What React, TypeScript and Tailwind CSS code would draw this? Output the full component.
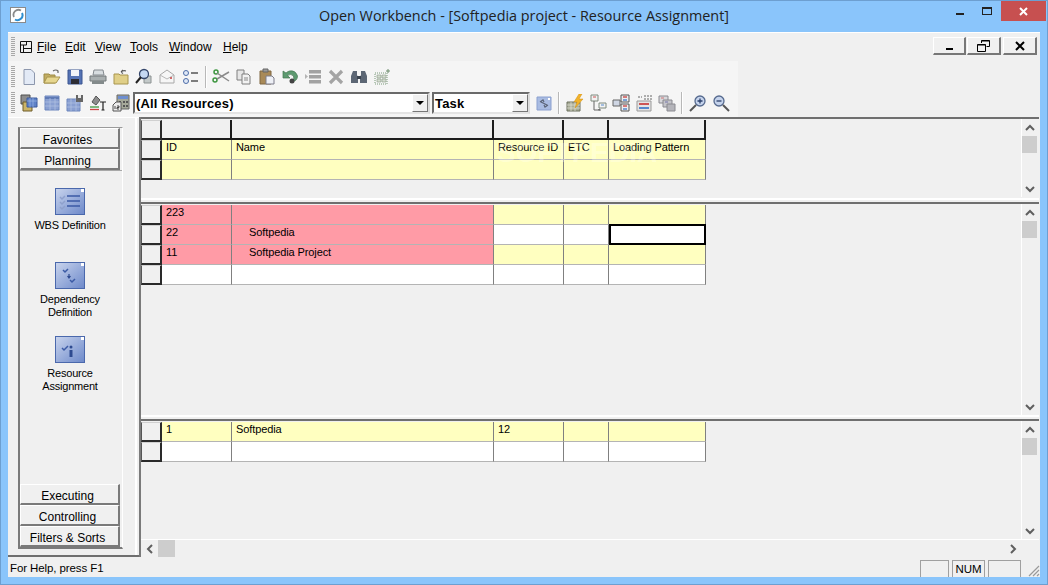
import type { ReactNode } from 'react';

const ui = { fontFamily: '"Liberation Sans", Arial, sans-serif' };

function Ico({ children }: { children: ReactNode }) {
  return (
    <svg width="18" height="18" viewBox="0 0 18 18" fill="none">
      {children}
    </svg>
  );
}

const icons: Record<string, ReactNode> = {
  new: <path d="M4 1.500h7l3.500 3.500v11.500H4z" fill="#e3eaf6" stroke="#8d97ad" />,
  open: (
    <>
      <path d="M1 6h5l1 1h5v8H1z" fill="#c2ad62" stroke="#9c8a45" />
      <path d="M1 15l3-6h13l-4 6z" fill="#e6d68f" stroke="#a8954e" />
      <path d="M10 3q3-2 5 0v2" stroke="#666" strokeWidth="1.200" />
    </>
  ),
  save: (
    <>
      <path d="M2 2h14v14H2z" fill="#5472b4" stroke="#3b5590" />
      <path d="M5 2h8v6H5z" fill="#f0f2f8" />
      <path d="M5 11h8v5H5z" fill="#2c2c34" />
    </>
  ),
  print: (
    <>
      <path d="M5 2h9l1 5H4z" fill="#d8dde0" stroke="#858b90" />
      <path d="M1 8h16v5H1z" fill="#a9afb0" stroke="#72787a" />
      <path d="M3 13h12v3H3z" fill="#838a8b" />
    </>
  ),
  folderUp: (
    <>
      <path d="M2 6h5l1 1h8v9H2z" fill="#e0cf88" stroke="#a8954e" />
      <path d="M9 4q2-2 5-1M9 4l2-2M9 4l2 1.500" stroke="#555" strokeWidth="1.100" />
    </>
  ),
  search: (
    <>
      <path d="M9 8h7v7H9z" fill="#c3c9c9" stroke="#8c9292" />
      <circle cx="9" cy="6" r="4.500" fill="#c5d8f2" stroke="#34466a" strokeWidth="1.300" />
      <path d="M6 9l-5 6" stroke="#222" strokeWidth="2" />
    </>
  ),
  mail: (
    <>
      <path d="M2 7l7-5 7 5v8H2z" fill="#f6f6f6" stroke="#a8a8a8" />
      <path d="M2 7l7 4 7-4" stroke="#b8b8b8" />
      <path d="M12 9h2v2h-2z" fill="#cf6a6a" />
    </>
  ),
  list: (
    <>
      <circle cx="5" cy="5" r="2.500" fill="#dfe8f6" stroke="#4d6da8" />
      <circle cx="5" cy="13" r="2.500" fill="#dfe8f6" stroke="#4d6da8" />
      <path d="M10 5h7M10 13h7" stroke="#555" strokeWidth="1.300" />
    </>
  ),
  cut: (
    <>
      <circle cx="4" cy="4" r="2" stroke="#3e9640" strokeWidth="1.500" />
      <circle cx="3" cy="12" r="2" stroke="#3e9640" strokeWidth="1.500" />
      <path d="M5 5l12 8M5 11l12-7" stroke="#8a8a8a" strokeWidth="1.500" />
    </>
  ),
  copy: (
    <>
      <path d="M2 2h7v10H2z" fill="#e6e6e6" stroke="#7f7f7f" />
      <path d="M7 6h6l2 2v8H7z" fill="#f2f2f2" stroke="#7f7f7f" />
      <path d="M9 10h4M9 12h4" stroke="#8a8a8a" />
    </>
  ),
  paste: (
    <>
      <path d="M2 3h11v13H2z" fill="#a98a58" stroke="#7f6741" />
      <path d="M5 1h5v3H5z" fill="#9a9a9a" stroke="#666" />
      <path d="M8 8h6l2 2v6H8z" fill="#eef0f6" stroke="#7d7d8a" />
    </>
  ),
  undo: (
    <>
      <path d="M2 3v7h7L6.500 7.500Q10 5 12.500 8q1.500 3-2 6 6-1 6-6-2-6-8-5-2 .5-3.500 2L2 3z" fill="#5d9a70" stroke="#44754f" strokeWidth=".7" />
      <circle cx="11" cy="13" r="2.500" fill="#444" />
    </>
  ),
  rows: (
    <>
      <path d="M5 2h12v3.500H5zM5 7h12v3.500H5zM5 12h12v3.500H5z" fill="#a2a2a2" />
      <path d="M1 6l3 2.500L1 11z" fill="#b4b4b4" />
    </>
  ),
  del: <path d="M3 3l12 12M15 3L3 15" stroke="#a4a4a4" strokeWidth="3.200" />,
  binoc: (
    <>
      <path d="M3 3h4v4l1 2v6H1V8zM11 3h4l2 5v7h-7V9l1-2z" fill="#5c6674" />
      <path d="M7 8h4v3H7z" fill="#3a424e" />
    </>
  ),
  grid: (
    <>
      <path d="M2 5h12v11H2z" stroke="#7b9a7b" strokeDasharray="1 1" />
      <path d="M4 7h4v3H4zM9 7h4v3H9zM4 11h4v3H4zM9 11h4v3H9z" fill="#d4dcd0" stroke="#8a9a86" strokeWidth=".6" />
      <path d="M15 1v4M13 3h4" stroke="#6d8c6d" />
    </>
  ),
  views: (
    <>
      <path d="M1 1h9v9H1z" fill="#8c8c8c" stroke="#4f4f4f" />
      <path d="M3 8h9v9H3z" fill="#cbb468" stroke="#6e5d28" />
      <path d="M7 4h10v9H7z" fill="#5f82c8" stroke="#3d5a9c" />
      <path d="M7 7h10M10 4v9M13 4v9" stroke="#a9c0ea" strokeWidth=".6" />
    </>
  ),
  table: (
    <>
      <path d="M2 2h14v14H2z" fill="#8aa0d2" stroke="#6c86bd" />
      <path d="M2 4h14" stroke="#5f7ab5" strokeWidth="2" />
      <path d="M2 8h14M2 12h14M7 4v12M12 4v12" stroke="#b3c3e4" strokeWidth=".7" />
    </>
  ),
  tableSave: (
    <>
      <path d="M1 5h13v12H1z" fill="#8aa0d2" stroke="#6c86bd" />
      <path d="M1 9h13M1 13h13M5 5v12M10 5v12" stroke="#b3c3e4" strokeWidth=".7" />
      <path d="M10 1h7v7h-7z" fill="#666" />
      <path d="M12 1h3v3h-3z" fill="#e8e8e8" />
    </>
  ),
  font: (
    <>
      <path d="M3 8l4-6 4 4-4 5z" fill="#8d8d8d" stroke="#555" />
      <path d="M1 13h9" stroke="#3e9640" strokeWidth="1.300" />
      <path d="M1 15.500h9" stroke="#c44" strokeWidth="1.300" />
      <path d="M11 8h6M14 8v8M12.500 16h3" stroke="#222" strokeWidth="1.200" />
    </>
  ),
  calc: (
    <>
      <path d="M5 1h12v14H5z" fill="#a6a99a" stroke="#666" />
      <path d="M6 2h10v3H6z" fill="#6f8fd0" />
      <path d="M7 7h2v2H7zM11 7h2v2h-2zM14 7h2v2h-2zM11 11h2v2h-2zM14 11h2v2h-2z" fill="#555" />
      <path d="M1 11l3-3h5v9H1z" fill="#ededed" stroke="#555" />
      <path d="M3 12v3M5 12h2v1.500H5V15h2" stroke="#222" strokeWidth=".8" />
    </>
  ),
  refresh: (
    <>
      <path d="M2 3h14v13H2z" fill="#a9bce2" stroke="#8ba0cf" />
      <path d="M5 8l3-2 1 2M13 11l-3 2-1-2M6 8l6 3" stroke="#5a6478" strokeWidth="1.200" />
      <path d="M13 4h2v2h-2z" fill="#fff" />
    </>
  ),
  flash: (
    <>
      <path d="M1 8h13v9H1z" fill="#a9ad98" stroke="#6c705e" />
      <path d="M1 11h13M1 14h13M5 8v9M9 8v9" stroke="#e2e4d8" strokeWidth=".7" />
      <path d="M13 0l-5 8h3l-2 6 8-9h-4l3-5z" fill="#f2b32a" stroke="#d08e12" strokeWidth=".5" />
    </>
  ),
  tree: (
    <>
      <path d="M2 1h7v6H2z" fill="#f2f2f2" stroke="#7f8a7f" />
      <path d="M10 9h7v5h-7z" fill="#f2f2f2" stroke="#7f8a7f" />
      <path d="M4 3h3" stroke="#c55" />
      <path d="M12 11h3" stroke="#58c" />
      <path d="M5 7v9h6M9 16l2-1v2" stroke="#666" />
    </>
  ),
  branch: (
    <>
      <path d="M1 6h7v6H1z" fill="#cfd6e4" stroke="#666" />
      <path d="M9 1h8v7H9zM9 10h8v7H9z" fill="#eee" stroke="#555" />
      <path d="M11 3h4M11 12h4" stroke="#c55" strokeWidth="1.500" />
      <path d="M11 6h4M11 15h4" stroke="#58c" strokeWidth="1.500" />
    </>
  ),
  sort: (
    <>
      <path d="M2 7h14v10H2z" fill="#e4e4e4" stroke="#999" />
      <path d="M4 10h10" stroke="#c55" strokeWidth="2" />
      <path d="M4 14h10" stroke="#58c" strokeWidth="2" />
      <path d="M9 2h8M9 5h8M3 3h4" stroke="#666" strokeDasharray="2 1" />
    </>
  ),
  stack: (
    <>
      <path d="M1 2h9v7H1z" fill="#d8d8dc" stroke="#8a8a90" />
      <path d="M5 6h9v7H5z" fill="#c4c4ca" stroke="#8a8a90" />
      <path d="M9 10h8v7H9z" fill="#b4b4ba" stroke="#8a8a90" />
      <path d="M3 4h3" stroke="#c77" />
      <path d="M7 8h3" stroke="#77a" />
    </>
  ),
  zoomIn: (
    <>
      <circle cx="11" cy="7" r="5" fill="#c5d3ec" stroke="#566a8e" strokeWidth="1.300" />
      <path d="M7 11l-6 6" stroke="#555" strokeWidth="2" />
      <path d="M8.500 7h5M11 4.500v5" stroke="#2a3f6a" strokeWidth="1.300" />
    </>
  ),
  zoomOut: (
    <>
      <circle cx="7" cy="7" r="5" fill="#c5d3ec" stroke="#566a8e" strokeWidth="1.300" />
      <path d="M11 11l6 6" stroke="#555" strokeWidth="2" />
      <path d="M4.500 7h5" stroke="#2a3f6a" strokeWidth="1.300" />
    </>
  ),
};

function Tool({ name }: { name: string }) {
  return (
    <div className="w-[23px] flex items-center justify-center">
      <Ico>{icons[name]}</Ico>
    </div>
  );
}

function Sep() {
  return (
    <div className="w-[8px] flex justify-center">
      <div className="w-[2px] h-[22px] border-l border-[#b8b8b8] border-r border-r-white" />
    </div>
  );
}

function Gripper({ className }: { className: string }) {
  return (
    <div className={`w-[4px] shrink-0 bg-[repeating-linear-gradient(to_bottom,#a8a8a8_0_1px,transparent_1px_2px)] ${className}`} />
  );
}

function Combo({ label, width }: { label: string; width: string }) {
  return (
    <div className={`${width} h-[22px] flex items-stretch bg-white border-2 border-[#6a6a6a] border-r-[#dcdcdc] border-b-[#e4e4e4]`}>
      <span className="flex-1 pl-[1px] text-[13px] leading-[19px] tracking-[0.15px] font-bold text-black">{label}</span>
      <div className="w-[16px] bg-[#f0f0f0] border border-white border-r-[#777] border-b-[#777] flex items-center justify-center">
        <div className="w-0 h-0 border-l-[4px] border-r-[4px] border-t-[4px] border-l-transparent border-r-transparent border-t-black" />
      </div>
    </div>
  );
}

function MdiButton({ children, width }: { children: ReactNode; width: string }) {
  return (
    <div className={`${width} h-[18px] bg-[#f0f0f0] border border-white border-r-[#777] border-b-[#777] border-r-2 border-b-2 flex items-center justify-center`}>
      {children}
    </div>
  );
}

function NavButton({ label }: { label: string }) {
  return (
    <div className="h-[21px] mr-[2px] pr-[4px] bg-[#f0f0f0] border border-white border-r-2 border-b-2 border-r-[#7a7a7a] border-b-[#7a7a7a] text-center text-[12px] leading-[22px] text-black">
      {label}
    </div>
  );
}

function NavItem({ lines, children, className }: { lines: string[]; children: ReactNode; className: string }) {
  return (
    <div className={`flex flex-col items-center pr-[2px] ${className}`}>
      <div className="relative w-[30px] h-[27px] border border-[#4a68ac] bg-gradient-to-br from-[#c8d3ec] to-[#6f8aca]">
        <div className="absolute right-0 top-0 w-[3px] h-[3px] bg-white" />
        <svg width="28" height="25" viewBox="0 0 28 25" fill="none">
          {children}
        </svg>
      </div>
      <div className="mt-[4px] text-center text-[11px] tracking-[-0.2px] leading-[13px] text-black">
        {lines.map((l) => (
          <div key={l}>{l}</div>
        ))}
      </div>
    </div>
  );
}

type CellData = { text?: string; bg?: string; indent?: boolean; selected?: boolean; header?: boolean };

const colsClass = 'grid grid-cols-[21px_70px_262px_70px_45px_97px] w-[565px]';

function Row({ cells }: { cells: CellData[] }) {
  return (
    <div className={`${colsClass} h-[20px]`}>
      <div className="bg-[#f0f0f0] border-t border-l border-t-[#d0d0d0] border-l-[#555] border-r-2 border-b-2 border-r-[#2a2a2a] border-b-[#2a2a2a]" />
      {cells.map((c, i) => (
        <div
          key={i}
          className={
            c.header
              ? 'bg-[#f0f0f0] border-r-2 border-b-2 border-[#1c1c1c]'
              : c.selected
                ? `bg-white border-2 border-black -mt-px h-[21px]`
                : `${c.bg ?? 'bg-white'} border-r border-r-[#808080] border-b border-b-[#b4b4b4]`
          }
        >
          {c.text && (
            <div className={`${c.indent ? 'pl-[17px]' : 'pl-[4px]'} text-[11px] tracking-[-0.1px] leading-[14px] text-black whitespace-nowrap overflow-hidden`}>
              {c.text}
            </div>
          )}
        </div>
      ))}
    </div>
  );
}

function Chevron({ dir }: { dir: 'up' | 'down' | 'left' | 'right' }) {
  const d = {
    up: 'M1 6l4-4 4 4',
    down: 'M1 2l4 4 4-4',
    left: 'M6 1L2 5l4 4',
    right: 'M2 1l4 4-4 4',
  }[dir];
  const vertical = dir === 'up' || dir === 'down';
  return (
    <svg width={vertical ? 10 : 8} height={vertical ? 8 : 10} viewBox={vertical ? '0 0 10 8' : '0 0 8 10'} fill="none">
      <path d={d} stroke="#5f5f5f" strokeWidth="2" />
    </svg>
  );
}

function VScroll() {
  return (
    <div className="w-[18px] shrink-0 flex flex-col border-l border-white pr-[2px]">
      <div className="h-[17px] flex items-center justify-center">
        <Chevron dir="up" />
      </div>
      <div className="h-[17px] bg-[#cdcdcd]" />
      <div className="flex-1" />
      <div className="h-[17px] flex items-center justify-center">
        <Chevron dir="down" />
      </div>
    </div>
  );
}

const Y = 'bg-[#ffffc0]';
const R = 'bg-[#ff9ba6]';

function Pane({ height, rows, children }: { height: string; rows: CellData[][]; children?: ReactNode }) {
  return (
    <div className={`${height} relative flex border-t-2 border-[#6f6f6f]`}>
      <div className="flex-1 pt-px overflow-hidden">
        {rows.map((cells, i) => (
          <Row key={i} cells={cells} />
        ))}
      </div>
      {children}
      <VScroll />
    </div>
  );
}

const H: CellData = { header: true };

const topRows: CellData[][] = [
  [H, H, H, H, H],
  [
    { text: 'ID', bg: Y },
    { text: 'Name', bg: Y },
    { text: 'Resource ID', bg: Y },
    { text: 'ETC', bg: Y },
    { text: 'Loading Pattern', bg: Y },
  ],
  [{ bg: Y }, { bg: Y }, { bg: Y }, { bg: Y }, { bg: Y }],
];

const midRows: CellData[][] = [
  [{ text: '223', bg: R }, { bg: R }, { bg: Y }, { bg: Y }, { bg: Y }],
  [{ text: '22', bg: R }, { text: 'Softpedia', bg: R, indent: true }, {}, {}, { selected: true }],
  [{ text: '11', bg: R }, { text: 'Softpedia Project', bg: R, indent: true }, { bg: Y }, { bg: Y }, { bg: Y }],
  [{}, {}, {}, {}, {}],
];

const bottomRows: CellData[][] = [
  [{ text: '1', bg: Y }, { text: 'Softpedia', bg: Y }, { text: '12', bg: Y }, { bg: Y }, { bg: Y }],
  [{}, {}, {}, {}, {}],
];

const menus = [
  { label: 'File', width: 'w-[28px]' },
  { label: 'Edit', width: 'w-[30px]' },
  { label: 'View', width: 'w-[35px]' },
  { label: 'Tools', width: 'w-[39px]' },
  { label: 'Window', width: 'w-[54px]' },
  { label: 'Help', width: 'w-[30px]' },
];

export default function App() {
  return (
    <div className="w-[1048px] h-[585px] overflow-hidden flex flex-col bg-[#8ac5fb] border border-[#6d9fd0] px-[7px] pb-[7px] text-black" style={ui}>
      {/* title bar */}
      <div className="h-[31px] shrink-0 relative flex items-center justify-center">
        <div className="absolute left-[2px] top-[6px] w-[16px] h-[16px] bg-white border border-[#8a8a8a] flex items-center justify-center">
          <svg width="14" height="14" viewBox="0 0 14 14" fill="none">
            <path d="M10 2.500A5 5 0 0 0 3 9" stroke="#8a8a8a" strokeWidth="1.800" />
            <path d="M11 5a5 5 0 0 1-7 6.500" stroke="#2f8fd0" strokeWidth="2" />
          </svg>
        </div>
        <span className="text-[14.4px] -mt-[2px] text-[#222]" style={{ fontFamily: '"Open Sans", sans-serif' }}>
          Open Workbench - [Softpedia project - Resource Assignment]
        </span>
        <div className="absolute right-[-6px] top-0 flex items-start">
          <div className="w-[27px] h-[20px] flex items-center justify-center pt-[5px]">
            <div className="w-[8px] h-[2px] bg-[#222]" />
          </div>
          <div className="w-[27px] h-[20px] flex items-center justify-center">
            <div className="w-[10px] h-[8px] border border-t-2 border-[#222]" />
          </div>
          <div className="w-[45px] h-[20px] ml-[1px] bg-[#c75050] flex items-center justify-center">
            <svg width="9" height="9" viewBox="0 0 9 9">
              <path d="M1 1l7 7M8 1L1 8" stroke="#fff" strokeWidth="2" />
            </svg>
          </div>
        </div>
      </div>

      {/* client */}
      <div className="flex-1 flex flex-col bg-[#f0f0f0] border-t border-white min-h-0">
        {/* menu */}
        <div className="h-[28px] shrink-0 flex items-center pl-[3px] relative">
          <Gripper className="h-[20px]" />
          <svg className="ml-[3px]" width="16" height="16" viewBox="0 0 16 16" fill="none">
            <path d="M2.500 2.500h11v11h-11zM2.500 6h6M8.500 2.500V6M5.500 6v7.500M5.500 9.500h8" stroke="#111" />
          </svg>
          <div className="flex ml-[3px] text-[12px] text-black">
            {menus.map((m) => (
              <span key={m.label} className={m.width}>
                <span className="underline">{m.label[0]}</span>
                {m.label.slice(1)}
              </span>
            ))}
          </div>
          <div className="absolute right-[3px] top-[4px] flex gap-[1px]">
            <MdiButton width="w-[33px]">
              <div className="w-[7px] h-[2px] bg-black mt-[6px]" />
            </MdiButton>
            <MdiButton width="w-[34px]">
              <svg width="13" height="12" viewBox="0 0 13 12" fill="none">
                <path d="M4.500 3V.5h8v6H9.500M.5 4.500h8v7h-8z" stroke="#000" />
                <path d="M4.500 1h8M.5 5h8" stroke="#000" />
              </svg>
            </MdiButton>
            <MdiButton width="w-[34px] ml-[1px]">
              <svg width="10" height="10" viewBox="0 0 10 10">
                <path d="M1 1l8 8M9 1L1 9" stroke="#000" strokeWidth="2" />
              </svg>
            </MdiButton>
          </div>
        </div>

        {/* toolbars */}
        <div className="w-[730px] h-[56px] shrink-0 bg-[#f5f5f5] flex flex-col pl-[3px]">
          <div className="h-[29px] flex items-center pt-[2px]">
            <Gripper className="h-[22px]" />
            <div className="flex pl-[2.500px]">
              {['new', 'open', 'save', 'print', 'folderUp', 'search', 'mail', 'list'].map((n) => (
                <Tool key={n} name={n} />
              ))}
              <Sep />
              {['cut', 'copy', 'paste', 'undo', 'rows', 'del', 'binoc', 'grid'].map((n) => (
                <Tool key={n} name={n} />
              ))}
            </div>
          </div>
          <div className="h-[27px] flex items-center pb-[1px]">
            <Gripper className="h-[22px]" />
            <div className="flex items-center pl-[2.500px]">
              {['views', 'table', 'tableSave', 'font', 'calc'].map((n) => (
                <Tool key={n} name={n} />
              ))}
              <Combo label="(All Resources)" width="w-[297px] ml-[0.500px]" />
              <div className="w-[2px]" />
              <Combo label="Task" width="w-[98px]" />
              <div className="w-[2px]" />
              <Tool name="refresh" />
              <Sep />
              {['flash', 'tree', 'branch', 'sort', 'stack'].map((n) => (
                <Tool key={n} name={n} />
              ))}
              <Sep />
              <Tool name="zoomIn" />
              <Tool name="zoomOut" />
            </div>
          </div>
        </div>

        {/* main */}
        <div className="h-[440px] shrink-0 flex">
          {/* navigator */}
          <div className="w-[131px] shrink-0 flex border-t border-white border-b-2 border-b-[#6f6f6f]">
            <div className="w-[129px] border-r-2 border-white pl-[10px] pt-[9px] pb-[6px]">
              <div className="w-[105px] h-full flex flex-col border-t border-t-[#9a9a9a] border-l-2 border-l-[#7a7a7a] border-r border-r-white border-b-2 border-b-[#7a7a7a]">
                <NavButton label="Favorites" />
                <NavButton label="Planning" />
                <div className="flex-1 border-t border-[#a8a8a8] pt-[17px]">
                  <NavItem lines={['WBS Definition']} className="">
                    <path d="M4 8l2 2 3-3M4 13l2 2 3-3M4 18l2 2 3-3" stroke="#8ea0cc" strokeWidth="1.500" />
                    <path d="M11 7h13M11 12h13M11 17h13" stroke="#3b5aa5" strokeWidth="1.600" />
                  </NavItem>
                  <NavItem lines={['Dependency', 'Definition']} className="mt-[30px]">
                    <path d="M7 7l2 2 3-3M14 17l2 2 3-3" stroke="#3b5aa5" strokeWidth="1.500" />
                    <path d="M13 11v3M11.500 13l1.500 2 1.500-2" stroke="#2e4a90" strokeWidth="1.200" />
                  </NavItem>
                  <NavItem lines={['Resource', 'Assignment']} className="mt-[17px]">
                    <path d="M6 11l2 2 4-4" stroke="#3b5aa5" strokeWidth="1.500" />
                    <circle cx="15" cy="10" r="1.500" fill="#2e4a90" />
                    <path d="M13.500 13h3v7h-3z" fill="#2e4a90" />
                  </NavItem>
                </div>
                <NavButton label="Executing" />
                <NavButton label="Controlling" />
                <NavButton label="Filters &amp; Sorts" />
              </div>
            </div>
          </div>

          {/* grids */}
          <div className="flex-1 min-w-0 flex flex-col border-l-2 border-[#7a7a7a] pr-[1px]">
            <Pane height="h-[80px]" rows={topRows}>
              <div className="absolute left-[356px] top-[20px] text-[28px] leading-[28px] font-bold text-white/30 pointer-events-none">
                SOFTPEDIA
              </div>
            </Pane>
            <div className="h-[5px] shrink-0 pt-px">
              <div className="h-[2px] bg-white" />
            </div>
            <Pane height="h-[213px]" rows={midRows} />
            <div className="h-[4px] shrink-0">
              <div className="h-[2px] bg-white" />
            </div>
            <Pane height="h-[120px]" rows={bottomRows} />
            <div className="h-[18px] shrink-0 flex border-t border-white">
              <div className="w-[17px] flex items-center justify-center">
                <Chevron dir="left" />
              </div>
              <div className="w-[17px] bg-[#cdcdcd]" />
              <div className="flex-1" />
              <div className="w-[17px] flex items-center justify-center">
                <Chevron dir="right" />
              </div>
              <div className="w-[18px] bg-[#f0f0f0]" />
            </div>
          </div>
        </div>

        {/* status bar */}
        <div className="h-[20px] shrink-0 flex items-end relative">
          <span className="pl-[2px] self-center pt-[3px] text-[11.5px] tracking-[-0.1px]">For Help, press F1</span>
          <div className="ml-auto flex gap-[3px] pr-[19px]">
            <div className="w-[29px] h-[17px] border border-[#a0a0a0] border-b-0" />
            <div className="w-[33px] h-[17px] border border-[#a0a0a0] border-b-0 text-center text-[11.5px] leading-[17px]">NUM</div>
            <div className="w-[33px] h-[17px] border border-[#a0a0a0] border-b-0" />
          </div>
          <svg className="absolute right-0 bottom-0" width="12" height="12" viewBox="0 0 12 12">
            <path d="M11 1L1 11M11 5l-6 6M11 9l-2 2" stroke="#9a9a9a" strokeWidth="1.200" />
          </svg>
        </div>
      </div>
    </div>
  );
}
